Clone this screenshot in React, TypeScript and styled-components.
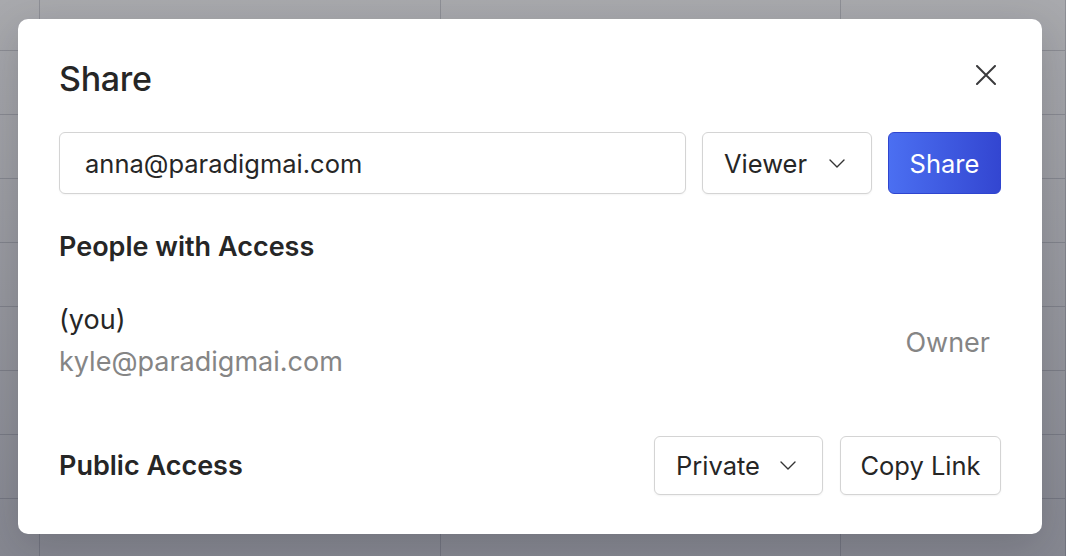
import React from "react";
import styled, { createGlobalStyle } from "styled-components";

const GlobalStyle = createGlobalStyle`
  html, body { margin: 0; padding: 0; }
  body {
    font-family: Inter, "Noto Sans", "Liberation Sans", sans-serif;
    color: #262626;
    background: #ffffff;
  }
  * { box-sizing: border-box; }
`;

const Page = styled.div`
  position: relative;
  width: 1066px;
  height: 556px;
  overflow: hidden;
`;

const Sheet = styled.div`
  display: grid;
  grid-template-columns: 40px 401px 400px 1fr;
  grid-auto-rows: 64px;
  grid-template-rows: 51px;
  width: 100%;
  height: 100%;
  background: #ffffff;
`;

const Cell = styled.div`
  border-right: 1px solid #d3d4d8;
  border-bottom: 1px solid #d3d4d8;
`;

const Overlay = styled.div`
  position: absolute;
  inset: 0;
  display: flex;
  align-items: flex-start;
  padding: 19px 24px 22px 18px;
  background: linear-gradient(180deg, rgba(38, 40, 50, 0.4) 0%, rgba(34, 37, 54, 0.55) 100%);
`;

const Dialog = styled.div`
  width: 1024px;
  height: 515px;
  background: #ffffff;
  border-radius: 10px;
  padding: 40px 41px 40px 41px;
  display: flex;
  flex-direction: column;
  box-shadow: 0 12px 40px rgba(20, 22, 35, 0.18);
`;

const Header = styled.div`
  display: flex;
  justify-content: space-between;
  align-items: flex-start;
`;

const Title = styled.h2`
  margin: 0;
  font-size: 34px;
  line-height: 40px;
  font-weight: 500;
  color: #262626;
  letter-spacing: -0.3px;
`;

const CloseButton = styled.button`
  border: 0;
  background: none;
  padding: 0;
  margin: 6px 5px 0 0;
  width: 20px;
  height: 20px;
  display: flex;
  color: #3a3a3c;
  cursor: pointer;
`;

const InviteRow = styled.div`
  display: flex;
  gap: 16px;
  margin-top: 33px;
  height: 62px;
`;

const EmailInput = styled.input`
  flex: 1;
  height: 62px;
  border: 1px solid #d4d4d4;
  border-radius: 6px;
  padding: 0 0 0 25px;
  font-family: inherit;
  font-size: 25.5px;
  color: #262626;
  outline: none;
  box-shadow: 0 1px 2px rgba(0, 0, 0, 0.04);
`;

const SelectButton = styled.button<{ $w: number; $h: number }>`
  width: ${(p) => p.$w}px;
  height: ${(p) => p.$h}px;
  display: flex;
  align-items: center;
  justify-content: space-between;
  padding: 0 26px 0 21px;
  border: 1px solid #d4d4d4;
  border-radius: 6px;
  background: #ffffff;
  font-family: inherit;
  font-size: 25.5px;
  color: #262626;
  box-shadow: 0 1px 2px rgba(0, 0, 0, 0.05);
`;

const PrimaryButton = styled.button`
  width: 113px;
  height: 62px;
  border: 1px solid #2f45cf;
  border-radius: 6px;
  background: linear-gradient(90deg, #4b6ff1 0%, #3346d1 100%);
  color: #ffffff;
  font-family: inherit;
  font-size: 25.5px;
  padding: 0;
`;

const SecondaryButton = styled.button`
  width: 161px;
  height: 59px;
  border: 1px solid #d4d4d4;
  border-radius: 6px;
  background: #ffffff;
  font-family: inherit;
  font-size: 25.5px;
  color: #262626;
  padding: 0;
  box-shadow: 0 1px 2px rgba(0, 0, 0, 0.05);
`;

const SectionTitle = styled.h3`
  margin: 0;
  font-size: 27px;
  line-height: 32px;
  font-weight: 600;
  color: #262626;
`;

const PeopleTitle = styled(SectionTitle)`
  margin-top: 37px;
`;

const PersonRow = styled.div`
  display: flex;
  justify-content: space-between;
  align-items: center;
  margin-top: 41px;
`;

const PersonInfo = styled.div`
  display: flex;
  flex-direction: column;
  gap: 10px;
`;

const PersonName = styled.div`
  font-size: 27px;
  line-height: 32px;
  color: #262626;
`;

const Muted = styled.div`
  font-size: 27px;
  line-height: 32px;
  color: #858585;
`;

const Role = styled(Muted)`
  margin: 4px 11px 0 0;
`;

const PublicRow = styled.div`
  display: flex;
  align-items: center;
  justify-content: space-between;
  margin-top: 58px;
`;

const Actions = styled.div`
  display: flex;
  gap: 17px;
`;

const Chevron = () => (
  <svg width="16" height="9" viewBox="0 0 16 9" fill="none">
    <polyline points="1,1 8,8 15,1" stroke="#333" strokeWidth="1.4" strokeLinecap="round" strokeLinejoin="round" />
  </svg>
);

const XIcon = () => (
  <svg width="20" height="20" viewBox="0 0 20 20" fill="none">
    <path d="M1 1 L19 19 M19 1 L1 19" stroke="currentColor" strokeWidth="2" strokeLinecap="round" />
  </svg>
);

export default function App() {
  const cells = Array.from({ length: 4 * 9 });
  return (
    <>
      <GlobalStyle />
      <Page>
        <Sheet>
          {cells.map((_, i) => (
            <Cell key={i} />
          ))}
        </Sheet>
        <Overlay>
          <Dialog>
            <Header>
              <Title>Share</Title>
              <CloseButton aria-label="Close">
                <XIcon />
              </CloseButton>
            </Header>
            <InviteRow>
              <EmailInput defaultValue="anna@paradigmai.com" />
              <SelectButton $w={170} $h={62}>
                <span>Viewer</span>
                <Chevron />
              </SelectButton>
              <PrimaryButton>Share</PrimaryButton>
            </InviteRow>
            <PeopleTitle>People with Access</PeopleTitle>
            <PersonRow>
              <PersonInfo>
                <PersonName>(you)</PersonName>
                <Muted>kyle@paradigmai.com</Muted>
              </PersonInfo>
              <Role>Owner</Role>
            </PersonRow>
            <PublicRow>
              <SectionTitle>Public Access</SectionTitle>
              <Actions>
                <SelectButton $w={169} $h={59}>
                  <span>Private</span>
                  <Chevron />
                </SelectButton>
                <SecondaryButton>Copy Link</SecondaryButton>
              </Actions>
            </PublicRow>
          </Dialog>
        </Overlay>
      </Page>
    </>
  );
}
